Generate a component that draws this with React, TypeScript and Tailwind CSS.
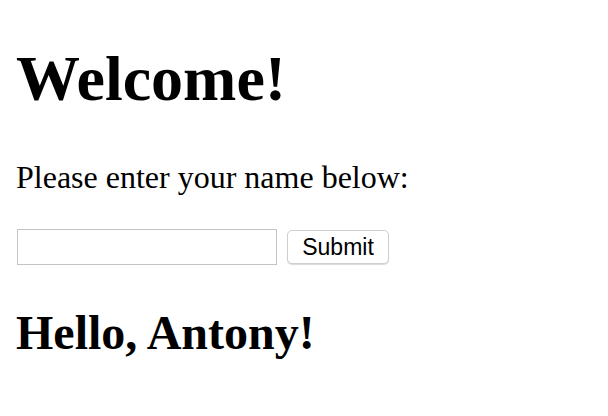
import React from 'react';

const App = () => {
  return (
    <div className="min-h-[416px] bg-white px-4 pt-[43px] text-black font-['Liberation_Serif',serif]">
      <h1 className="text-[64px] font-bold leading-[71px]">Welcome!</h1>
      <p className="mt-[45px] text-[32px] leading-[36px]">Please enter your name below:</p>
      <form className="mt-[34px] flex items-center gap-[10px]" onSubmit={(e) => e.preventDefault()}>
        <input
          type="text"
          className="ml-px h-[36px] w-[260px] border border-[#c4c4c4] bg-white px-1 outline-none"
        />
        <button
          type="submit"
          className="h-[34px] w-[102px] rounded-[5px] border border-[#cfcfcf] bg-white text-[23px] leading-none font-['Liberation_Sans',sans-serif] shadow-[0_1px_1px_rgba(0,0,0,0.15)]"
        >
          Submit
        </button>
      </form>
      <h2 className="mt-[41px] text-[48px] font-bold leading-[53px]">Hello, Antony!</h2>
    </div>
  );
};

export default App;
